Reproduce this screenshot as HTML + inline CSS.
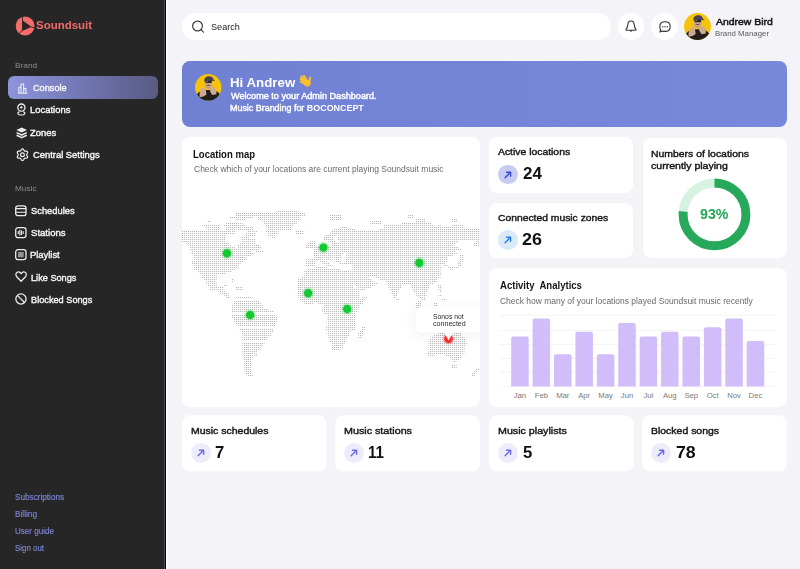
<!DOCTYPE html><html><head><meta charset="utf-8"><style>
*{margin:0;padding:0;box-sizing:border-box}
html,body{width:800px;height:569px;overflow:hidden;background:#f3f3f8;font-family:"Liberation Sans",sans-serif}
.t{position:absolute;white-space:nowrap;line-height:1}
.a{position:absolute}
.card{position:absolute;background:#fff;border-radius:8px}
.ic{position:absolute;border-radius:50%}
.ic svg{position:absolute;left:0;top:0;width:100%;height:100%}
</style></head><body>
<svg class="a" style="left:0;top:0" width="170" height="569"><rect x="0" y="0" width="164" height="569" fill="#262626"/><rect x="163.6" y="0" width="1.2" height="569" fill="#343434"/><rect x="164.8" y="0" width="1.2" height="569" fill="#050505"/><rect x="166" y="0" width="2" height="569" fill="#fcfcfe"/></svg>
<svg class="a" style="left:15px;top:15.5px" width="20" height="20" viewBox="0 0 20 20"><circle cx="10.1" cy="10" r="9.4" fill="#f46d6b"/><path d="M7.5 0.8 V14.5 L4.2 17.2 M7.5 4.8 L15.6 10.7 L19.5 12 M15.6 10.7 L7.5 14.5" stroke="#242424" stroke-width="0.9" fill="none"/><path d="M7.5 4.8 L15.6 10.7 L7.5 14.5 Z" fill="#2a2626"/></svg>
<div class="t" style="left:36.47px;top:19.73px;font-size:11.30px;font-weight:700;color:#f26b6b;transform:scaleX(1.0151);transform-origin:0 0;">Soundsuit</div>
<div class="t" style="left:15.32px;top:61.73px;font-size:8.00px;font-weight:400;color:#8d8d8d;transform:scaleX(1.0408);transform-origin:0 0;">Brand</div>
<div class="a" style="left:8.2px;top:76.3px;width:149.8px;height:22.8px;border-radius:6px;background:linear-gradient(90deg,#8e94dc 0%,#7176b2 50%,#585a82 100%)"></div>
<div class="t" style="left:33.28px;top:83.25px;font-size:9.80px;font-weight:400;color:#f5f5f7;transform:scaleX(0.9351);transform-origin:0 0;-webkit-text-stroke:0.4px currentColor;">Console</div>
<div class="t" style="left:30.47px;top:105.10px;font-size:9.80px;font-weight:400;color:#f5f5f7;transform:scaleX(0.9646);transform-origin:0 0;-webkit-text-stroke:0.4px currentColor;">Locations</div>
<div class="t" style="left:30.40px;top:127.90px;font-size:9.80px;font-weight:400;color:#f5f5f7;transform:scaleX(0.9634);transform-origin:0 0;-webkit-text-stroke:0.4px currentColor;">Zones</div>
<div class="t" style="left:32.62px;top:149.80px;font-size:9.80px;font-weight:400;color:#f5f5f7;transform:scaleX(0.9568);transform-origin:0 0;-webkit-text-stroke:0.4px currentColor;">Central Settings</div>
<div class="t" style="left:30.58px;top:206.20px;font-size:9.80px;font-weight:400;color:#f5f5f7;transform:scaleX(0.9540);transform-origin:0 0;-webkit-text-stroke:0.4px currentColor;">Schedules</div>
<div class="t" style="left:30.57px;top:228.00px;font-size:9.80px;font-weight:400;color:#f5f5f7;transform:scaleX(0.9766);transform-origin:0 0;-webkit-text-stroke:0.4px currentColor;">Stations</div>
<div class="t" style="left:30.23px;top:250.20px;font-size:9.80px;font-weight:400;color:#f5f5f7;transform:scaleX(0.9580);transform-origin:0 0;-webkit-text-stroke:0.4px currentColor;">Playlist</div>
<div class="t" style="left:30.50px;top:272.75px;font-size:9.80px;font-weight:400;color:#f5f5f7;transform:scaleX(0.9370);transform-origin:0 0;-webkit-text-stroke:0.4px currentColor;">Like Songs</div>
<div class="t" style="left:30.50px;top:294.60px;font-size:9.80px;font-weight:400;color:#f5f5f7;transform:scaleX(0.9382);transform-origin:0 0;-webkit-text-stroke:0.4px currentColor;">Blocked Songs</div>
<div class="t" style="left:15.32px;top:184.83px;font-size:8.00px;font-weight:400;color:#8d8d8d;transform:scaleX(1.0288);transform-origin:0 0;">Music</div>
<svg class="a" style="left:17px;top:82.5px;overflow:visible" width="14" height="14" viewBox="0 0 14 14"><path d="M1 10.3 H10.2 M1.8 10.3 V4.3 H4 V10.3 M4 10.3 V1 H6.6 V10.3 M6.6 10.3 V5.6 H8.9 V10.3" stroke="#ededed" stroke-width="1.1" fill="none" stroke-linejoin="round"/></svg>
<svg class="a" style="left:16.9px;top:103px;overflow:visible" width="14" height="14" viewBox="0 0 14 14"><circle cx="4.4" cy="4.6" r="3.6" stroke="#ededed" stroke-width="1.3" fill="none"/><circle cx="4.4" cy="4.4" r="1.2" fill="#ededed"/><path d="M2.4 8.6 Q0.6 9.5 0.9 10.8 Q1.5 12 4.4 12 Q7.3 12 7.9 10.8 Q8.2 9.5 6.4 8.6" stroke="#ededed" stroke-width="1.2" fill="none"/></svg>
<svg class="a" style="left:15.5px;top:127.1px;overflow:visible" width="14" height="14" viewBox="0 0 14 14"><path d="M5.7 0.6 L11 3 L5.7 5.4 L0.4 3 Z" fill="#ededed"/><path d="M0.6 5.6 L5.7 8 L10.8 5.6 M0.6 8.2 L5.7 10.6 L10.8 8.2" stroke="#ededed" stroke-width="1.6" fill="none" stroke-linejoin="round"/></svg>
<svg class="a" style="left:16px;top:147.5px;overflow:visible" width="14" height="14" viewBox="0 0 14 14"><path d="M6.45 0.85 L7.04 1.04 L7.54 1.55 L7.91 2.19 L8.20 2.76 L8.53 3.11 L8.98 3.21 L9.62 3.18 L10.36 3.18 L11.05 3.36 L11.52 3.77 L11.65 4.39 L11.46 5.07 L11.08 5.72 L10.74 6.25 L10.60 6.70 L10.74 7.15 L11.08 7.68 L11.46 8.33 L11.65 9.01 L11.52 9.62 L11.05 10.04 L10.36 10.22 L9.62 10.22 L8.98 10.19 L8.53 10.29 L8.20 10.64 L7.91 11.21 L7.54 11.85 L7.04 12.36 L6.45 12.55 L5.86 12.36 L5.36 11.85 L4.99 11.21 L4.70 10.64 L4.38 10.29 L3.92 10.19 L3.28 10.22 L2.54 10.22 L1.85 10.04 L1.38 9.63 L1.25 9.01 L1.44 8.33 L1.82 7.68 L2.16 7.15 L2.30 6.70 L2.16 6.25 L1.82 5.72 L1.44 5.07 L1.25 4.39 L1.38 3.77 L1.85 3.36 L2.54 3.18 L3.28 3.18 L3.92 3.21 L4.38 3.11 L4.70 2.76 L4.99 2.19 L5.36 1.55 L5.86 1.04Z" stroke="#ededed" stroke-width="1.2" fill="none" stroke-linejoin="round"/><circle cx="6.45" cy="6.7" r="1.9" stroke="#ededed" stroke-width="1.2" fill="none"/></svg>
<svg class="a" style="left:15.1px;top:205.3px;overflow:visible" width="14" height="14" viewBox="0 0 14 14"><rect x="0.7" y="0.8" width="10.3" height="9.9" rx="2.3" stroke="#ededed" stroke-width="1.3" fill="none"/><path d="M0.8 3.6 H11 M0.8 7.2 H11" stroke="#ededed" stroke-width="1.1"/></svg>
<svg class="a" style="left:15.1px;top:227.3px;overflow:visible" width="14" height="14" viewBox="0 0 14 14"><rect x="0.7" y="0.7" width="10.3" height="9.9" rx="2.3" stroke="#ededed" stroke-width="1.3" fill="none"/><path d="M3.3 4 V7.3 M4.9 2.8 V8.5 M6.5 3.4 V7.9 M8.2 4.3 V7" stroke="#ededed" stroke-width="1.1"/></svg>
<svg class="a" style="left:15.1px;top:249.3px;overflow:visible" width="14" height="14" viewBox="0 0 14 14"><rect x="0.7" y="0.7" width="10.3" height="9.9" rx="2.3" stroke="#ededed" stroke-width="1.3" fill="none"/><rect x="3" y="3" width="5.7" height="5.3" fill="#ededed" opacity="0.55"/></svg>
<svg class="a" style="left:15px;top:271.4px;overflow:visible" width="14" height="14" viewBox="0 0 14 14"><path d="M6.1 10.2 L1.7 5.8 Q0.2 4 1.2 2.2 Q2.6 0.2 4.6 1.2 L6.1 2.5 L7.6 1.2 Q9.6 0.2 11 2.2 Q12 4 10.5 5.8 Z" stroke="#ededed" stroke-width="1.3" fill="none" stroke-linejoin="round"/></svg>
<svg class="a" style="left:15px;top:293.25px;overflow:visible" width="14" height="14" viewBox="0 0 14 14"><circle cx="5.95" cy="5.95" r="5.1" stroke="#ededed" stroke-width="1.3" fill="none"/><path d="M2.4 2.4 L9.5 9.5" stroke="#ededed" stroke-width="1.3"/></svg>
<div class="t" style="left:15.43px;top:493.86px;font-size:8.20px;font-weight:400;color:#7d87d6;transform:scaleX(0.9989);transform-origin:0 0;-webkit-text-stroke:0.15px currentColor;">Subscriptions</div>
<div class="t" style="left:15.12px;top:510.66px;font-size:8.20px;font-weight:400;color:#7d87d6;transform:scaleX(1.0060);transform-origin:0 0;-webkit-text-stroke:0.15px currentColor;">Billing</div>
<div class="t" style="left:15.18px;top:528.16px;font-size:8.20px;font-weight:400;color:#7d87d6;transform:scaleX(0.9817);transform-origin:0 0;-webkit-text-stroke:0.15px currentColor;">User guide</div>
<div class="t" style="left:15.44px;top:545.36px;font-size:8.20px;font-weight:400;color:#7d87d6;transform:scaleX(0.9677);transform-origin:0 0;-webkit-text-stroke:0.15px currentColor;">Sign out</div>
<div class="a" style="left:182px;top:13.3px;width:429px;height:26.4px;border-radius:13.2px;background:#fff"></div>
<svg class="a" style="left:189px;top:18px" width="18" height="18" viewBox="0 0 18 18"><circle cx="8.5" cy="8" r="4.9" stroke="#3c3c3c" stroke-width="1.2" fill="none"/><path d="M12 11.6 L14.4 14.2" stroke="#3c3c3c" stroke-width="1.2" stroke-linecap="round"/></svg>
<div class="t" style="left:211.08px;top:22.24px;font-size:9.40px;font-weight:400;color:#1c1c1c;transform:scaleX(0.9740);transform-origin:0 0;">Search</div>
<div class="ic" style="left:617.5px;top:12.9px;width:26.8px;height:26.8px;background:#fff"></div>
<svg class="a" style="left:622px;top:17.5px" width="18" height="18" viewBox="0 0 18 18"><path d="M9 2.9 Q12 2.9 12.2 6.6 Q12.4 9.6 14.1 11.5 Q14.4 12.2 13.5 12.2 H4.5 Q3.6 12.2 3.9 11.5 Q5.6 9.6 5.8 6.6 Q6 2.9 9 2.9 Z" stroke="#2e2e2e" stroke-width="1.05" fill="none" stroke-linejoin="round"/><path d="M7.7 12.4 Q9 15.2 10.3 12.4 Z" fill="#2e2e2e"/></svg>
<div class="ic" style="left:651px;top:12.9px;width:26.8px;height:26.8px;background:#fff"></div>
<svg class="a" style="left:655.5px;top:17.5px" width="18" height="18" viewBox="0 0 18 18"><path d="M9 3.8 Q14.2 3.8 14.2 8.7 Q14.2 13.4 9 13.4 Q7.6 13.4 6.4 12.9 L3.9 14 L4.7 11.7 Q3.8 10.5 3.8 8.7 Q3.8 3.8 9 3.8 Z" stroke="#333" stroke-width="1.1" fill="none" stroke-linejoin="round"/><circle cx="6.7" cy="8.7" r="0.7" fill="#333"/><circle cx="9" cy="8.7" r="0.7" fill="#333"/><circle cx="11.3" cy="8.7" r="0.7" fill="#333"/></svg>
<svg class="a" style="left:684.4px;top:12.899999999999999px" width="27" height="27" viewBox="0 0 40 40"><defs><clipPath id="cpa"><circle cx="20" cy="20" r="20"/></clipPath></defs><g clip-path="url(#cpa)"><rect width="40" height="40" fill="#f6c30b"/><path d="M1 42 L3.5 30 Q8 24.5 14 24 L26 24 Q33 24.5 37 30 L40 42 Z" fill="#221e1b"/><ellipse cx="20.2" cy="15.5" rx="5.6" ry="7.2" fill="#c7a288"/><path d="M16.5 17 Q20 15.3 23.8 17 Q20 18.4 16.5 17 Z" fill="#4a3a30"/><path d="M13.8 10.2 Q14 3.6 21 3.5 Q27.5 3.8 28 8.5 L30.5 10.2 L13.8 11.2 Z" fill="#4b4250"/><rect x="15.6" y="10" width="9.8" height="3.6" rx="1.5" fill="#2a2526"/><rect x="17" y="10.5" width="2.6" height="1.3" fill="#9e8d80"/><path d="M7 34.5 Q5.5 26 11 21 Q14.5 20 16.3 23.5 L17.2 31 Q13 35.5 7 34.5 Z" fill="#cdab92"/><path d="M22.2 22.5 Q25 18.2 29 20 Q33 24 32.2 30.5 L26 31.5 Q22 27.5 22.2 22.5 Z" fill="#cdab92"/></g></svg>
<div class="t" style="left:716.18px;top:16.82px;font-size:9.90px;font-weight:400;color:#141414;transform:scaleX(1.0570);transform-origin:0 0;-webkit-text-stroke:0.5px currentColor;">Andrew Bird</div>
<div class="t" style="left:715.11px;top:29.70px;font-size:7.80px;font-weight:400;color:#5c5c5c;transform:scaleX(1.0048);transform-origin:0 0;">Brand Manager</div>
<div class="a" style="left:182px;top:61.2px;width:604.6px;height:66.3px;border-radius:8px;background:linear-gradient(90deg,#7080d3,#7889dc)"></div>
<svg class="a" style="left:195.39999999999998px;top:74.4px" width="26.6" height="26.6" viewBox="0 0 40 40"><defs><clipPath id="cpb"><circle cx="20" cy="20" r="20"/></clipPath></defs><g clip-path="url(#cpb)"><rect width="40" height="40" fill="#f6c30b"/><path d="M1 42 L3.5 30 Q8 24.5 14 24 L26 24 Q33 24.5 37 30 L40 42 Z" fill="#221e1b"/><ellipse cx="20.2" cy="15.5" rx="5.6" ry="7.2" fill="#c7a288"/><path d="M16.5 17 Q20 15.3 23.8 17 Q20 18.4 16.5 17 Z" fill="#4a3a30"/><path d="M13.8 10.2 Q14 3.6 21 3.5 Q27.5 3.8 28 8.5 L30.5 10.2 L13.8 11.2 Z" fill="#4b4250"/><rect x="15.6" y="10" width="9.8" height="3.6" rx="1.5" fill="#2a2526"/><rect x="17" y="10.5" width="2.6" height="1.3" fill="#9e8d80"/><path d="M7 34.5 Q5.5 26 11 21 Q14.5 20 16.3 23.5 L17.2 31 Q13 35.5 7 34.5 Z" fill="#cdab92"/><path d="M22.2 22.5 Q25 18.2 29 20 Q33 24 32.2 30.5 L26 31.5 Q22 27.5 22.2 22.5 Z" fill="#cdab92"/></g></svg>
<div class="t" style="left:229.71px;top:75.90px;font-size:13.00px;font-weight:700;color:#fff;transform:scaleX(1.0229);transform-origin:0 0;">Hi Andrew</div>
<svg class="a" style="left:298px;top:74px" width="14" height="14" viewBox="0 0 14 14"><g stroke="#fbbf2a" stroke-linecap="round" fill="none"><path d="M5.9 1.9 L9 6.8" stroke-width="2.1"/><path d="M3.4 2.5 L7.6 7.6" stroke-width="2.1"/><path d="M2.6 4.8 L7.2 9" stroke-width="2.1"/><path d="M2.8 7.6 L7.2 10.2" stroke-width="2"/><path d="M12.3 3.8 L11 8.2" stroke-width="2"/></g><ellipse cx="9.4" cy="9.3" rx="3.3" ry="3.3" fill="#fbbf2a"/><path d="M7 12 Q9.5 13.3 11.8 11.2" stroke="#e9a21c" stroke-width="0.8" fill="none"/></svg>
<div class="t" style="left:230.56px;top:91.55px;font-size:8.80px;font-weight:400;color:#fff;transform:scaleX(1.0353);transform-origin:0 0;-webkit-text-stroke:0.4px currentColor;">Welcome to your Admin Dashboard.</div>
<div class="t" style="left:229.87px;top:103.65px;font-size:8.80px;font-weight:400;color:#fff;transform:scaleX(1.0136);transform-origin:0 0;-webkit-text-stroke:0.4px currentColor;">Music Branding for <b style="-webkit-text-stroke:0">BOCONCEPT</b></div>
<div class="card" style="left:182px;top:137px;width:298px;height:269.5px;overflow:hidden">
<svg style="position:absolute;left:0;top:0" width="298" height="269" viewBox="182 137 298 269"><defs><pattern id="dots" patternUnits="userSpaceOnUse" width="2" height="2"><rect x="0" y="1" width="1" height="1" fill="#b6b6b6"/><rect x="1" y="1" width="1" height="1" fill="#f6f6f6"/></pattern><radialGradient id="gg"><stop offset="0.55" stop-color="#12c92f"/><stop offset="0.65" stop-color="#12c92f" stop-opacity="0.35"/><stop offset="1" stop-color="#12c92f" stop-opacity="0"/></radialGradient><radialGradient id="rg"><stop offset="0.6" stop-color="#ff2d2d"/><stop offset="0.7" stop-color="#ff2d2d" stop-opacity="0.35"/><stop offset="1" stop-color="#ff2d2d" stop-opacity="0"/></radialGradient><filter id="sh" x="-80%" y="-150%" width="260%" height="400%"><feDropShadow dx="0" dy="2" stdDeviation="6" flood-color="#6060b0" flood-opacity="0.10"/></filter></defs>
<path d="M276.3 210H298.2V212H276.3ZM235.3 212H257.7V214H235.3ZM257.8 212H305.7V214H257.8ZM235.3 214H257.7V216H235.3ZM257.8 214H305.7V216H257.8ZM329.8 214H341.7V216H329.8ZM407.7 214H413.6V216H407.7ZM229.3 216H253.2V218H229.3ZM257.8 216H300.4V218H257.8ZM329.8 216H341.7V218H329.8ZM407.7 216H413.6V218H407.7ZM235.3 218H245.7V220H235.3ZM258.3 218H300.7V220H258.3ZM329.8 218H341.7V220H329.8ZM415.2 218H425.5V220H415.2ZM451.1 218H456.9V220H451.1ZM206.8 220H211.2V222H206.8ZM262.3 220H296.7V222H262.3ZM370.3 220H382.2V222H370.3ZM415.2 220H425.5V222H415.2ZM451.1 220H456.9V222H451.1ZM226.3 222H242.7V224H226.3ZM263.8 222H296.7V224H263.8ZM370.3 222H382.2V224H370.3ZM401.7 222H431.5V224H401.7ZM202.3 224H220.2V226H202.3ZM223.3 224H245.7V226H223.3ZM265.3 224H293.7V226H265.3ZM383.8 224H389.7V226H383.8ZM397.3 224H410.7V226H397.3ZM385.3 224H434.5V226H385.3ZM437.3 224H441.7V226H437.3ZM451.1 224H464.4V226H451.1ZM205.3 226H220.2V228H205.3ZM224.8 226H233.7V228H224.8ZM233.8 226H242.7V228H233.8ZM244.3 226H253.2V228H244.3ZM266.8 226H290.7V228H266.8ZM340.3 226H347.7V228H340.3ZM383.8 226H410.7V228H383.8ZM385.3 226H464.4V228H385.3ZM206.8 228H220.2V230H206.8ZM225.3 228H235.7V230H225.3ZM236.8 228H244.2V230H236.8ZM244.3 228H253.2V230H244.3ZM266.8 228H292.2V230H266.8ZM332.8 228H355.2V230H332.8ZM379.3 228H410.7V230H379.3ZM380.8 228H480.7V230H380.8ZM181.6 230H236.2V232H181.6ZM246.8 230H257.2V232H246.8ZM265.3 230H278.7V232H265.3ZM295.3 230H304.2V232H295.3ZM331.3 230H410.7V232H331.3ZM379.3 230H480.7V232H379.3ZM181.3 232H234.7V234H181.3ZM245.3 232H255.7V234H245.3ZM268.3 232H278.7V234H268.3ZM295.3 232H303.7V234H295.3ZM329.8 232H410.7V234H329.8ZM379.3 232H480.7V234H379.3ZM181.3 234H225.7V236H181.3ZM245.3 234H255.7V236H245.3ZM268.3 234H275.7V236H268.3ZM325.3 234H335.7V236H325.3ZM337.3 234H410.7V236H337.3ZM379.3 234H480.7V236H379.3ZM181.3 236H225.7V238H181.3ZM240.8 236H249.7V238H240.8ZM271.3 236H275.7V238H271.3ZM323.8 236H334.2V238H323.8ZM337.3 236H410.7V238H337.3ZM379.3 236H480.7V238H379.3ZM181.3 238H225.7V240H181.3ZM240.8 238H255.7V240H240.8ZM323.8 238H334.2V240H323.8ZM337.3 238H410.7V240H337.3ZM379.3 238H480.7V240H379.3ZM181.3 240H225.7V242H181.3ZM240.8 240H255.7V242H240.8ZM310.3 240H314.7V242H310.3ZM328.3 240H335.7V242H328.3ZM338.8 240H410.7V242H338.8ZM379.3 240H458.4V242H379.3ZM475.0 240H480.7V242H475.0ZM186.1 242H228.7V244H186.1ZM239.3 242H255.7V244H239.3ZM307.3 242H316.2V244H307.3ZM331.3 242H410.7V244H331.3ZM379.3 242H455.4V244H379.3ZM473.3 242H479.4V244H473.3ZM188.3 244H231.7V246H188.3ZM237.8 244H260.2V246H237.8ZM305.8 244H316.2V246H305.8ZM331.3 244H410.7V246H331.3ZM379.3 244H453.9V246H379.3ZM473.3 244H479.4V246H473.3ZM189.8 246H234.7V248H189.8ZM237.8 246H261.7V248H237.8ZM305.8 246H320.7V248H305.8ZM326.8 246H410.7V248H326.8ZM379.3 246H458.4V248H379.3ZM189.8 248H258.7V250H189.8ZM313.3 248H410.7V250H313.3ZM379.3 248H461.4V250H379.3ZM191.3 250H251.2V252H191.3ZM255.8 250H263.2V252H255.8ZM313.3 250H410.7V252H313.3ZM379.3 250H455.4V252H379.3ZM191.3 252H254.2V254H191.3ZM313.3 252H343.2V254H313.3ZM346.3 252H410.7V254H346.3ZM379.3 252H456.9V254H379.3ZM192.8 254H251.2V256H192.8ZM313.3 254H332.7V256H313.3ZM334.3 254H341.7V256H334.3ZM346.3 254H410.7V256H346.3ZM379.3 254H453.9V256H379.3ZM460.0 254H463.7V256H460.0ZM192.8 256H246.7V258H192.8ZM313.3 256H332.7V258H313.3ZM334.3 256H341.7V258H334.3ZM346.3 256H410.7V258H346.3ZM379.3 256H448.0V258H379.3ZM459.3 256H463.7V258H459.3ZM192.8 258H246.7V260H192.8ZM305.8 258H332.7V260H305.8ZM334.3 258H340.2V260H334.3ZM344.8 258H410.7V260H344.8ZM379.3 258H448.0V260H379.3ZM459.3 258H463.7V260H459.3ZM191.3 260H243.7V262H191.3ZM305.8 260H316.2V262H305.8ZM319.3 260H326.7V262H319.3ZM334.3 260H341.7V262H334.3ZM344.8 260H410.7V262H344.8ZM379.3 260H448.0V262H379.3ZM458.3 260H462.7V262H458.3ZM191.3 262H240.7V264H191.3ZM305.8 262H316.2V264H305.8ZM322.3 262H329.7V264H322.3ZM338.8 262H410.7V264H338.8ZM379.3 262H445.0V264H379.3ZM457.0 262H462.2V264H457.0ZM192.8 264H239.2V266H192.8ZM305.8 264H314.7V266H305.8ZM325.3 264H331.2V266H325.3ZM352.3 264H410.7V266H352.3ZM379.3 264H440.5V266H379.3ZM443.3 264H447.7V266H443.3ZM457.0 264H461.4V266H457.0ZM193.6 266H238.4V268H193.6ZM314.8 266H326.7V268H314.8ZM352.3 266H410.7V268H352.3ZM379.3 266H442.0V268H379.3ZM448.1 266H458.4V268H448.1ZM194.3 268H234.7V270H194.3ZM307.3 268H340.2V270H307.3ZM352.3 268H410.7V270H352.3ZM379.3 268H440.5V270H379.3ZM449.3 268H452.7V270H449.3ZM197.3 270H231.7V272H197.3ZM304.3 270H350.7V272H304.3ZM352.3 270H410.7V272H352.3ZM379.3 270H440.5V272H379.3ZM198.8 272H225.7V274H198.8ZM304.3 272H410.7V274H304.3ZM379.3 272H442.0V274H379.3ZM201.8 274H216.7V276H201.8ZM304.3 274H410.7V276H304.3ZM379.3 274H440.5V276H379.3ZM201.8 276H216.7V278H201.8ZM301.3 276H368.7V278H301.3ZM376.3 276H410.7V278H376.3ZM379.3 276H440.5V278H379.3ZM203.3 278H216.7V280H203.3ZM231.3 278H233.7V280H231.3ZM298.3 278H371.7V280H298.3ZM382.3 278H410.7V280H382.3ZM379.3 278H437.5V280H379.3ZM205.3 280H215.7V282H205.3ZM231.3 280H233.7V282H231.3ZM297.3 280H374.7V282H297.3ZM385.3 280H410.7V282H385.3ZM385.3 280H430.0V282H385.3ZM385.3 280H437.5V282H385.3ZM206.3 282H216.7V284H206.3ZM297.3 282H377.7V284H297.3ZM386.8 282H410.7V284H386.8ZM386.8 282H403.1V284H386.8ZM409.3 282H433.0V284H409.3ZM207.8 284H216.7V286H207.8ZM223.3 284H226.7V286H223.3ZM388.3 284H401.7V286H388.3ZM410.7 284H430.0V286H410.7ZM438.3 284H441.7V286H438.3ZM297.3 284H353.7V286H297.3ZM355.3 284H374.7V286H355.3ZM209.3 286H224.2V288H209.3ZM235.3 286H242.7V288H235.3ZM388.3 286H401.7V288H388.3ZM410.7 286H430.0V288H410.7ZM438.3 286H441.7V288H438.3ZM297.3 286H353.7V288H297.3ZM356.8 286H371.7V288H356.8ZM209.3 288H224.2V290H209.3ZM235.3 288H242.7V290H235.3ZM389.8 288H400.1V290H389.8ZM412.3 288H428.5V290H412.3ZM438.3 288H441.7V290H438.3ZM297.3 288H358.2V290H297.3ZM358.3 288H365.7V290H358.3ZM218.3 290H225.7V292H218.3ZM391.3 290H398.7V292H391.3ZM413.7 290H427.0V292H413.7ZM439.1 290H442.0V292H439.1ZM297.3 290H359.7V292H297.3ZM219.8 292H228.7V294H219.8ZM391.3 292H397.2V294H391.3ZM415.2 292H425.5V294H415.2ZM297.3 292H359.7V294H297.3ZM224.3 294H228.7V296H224.3ZM392.8 294H397.1V296H392.8ZM416.3 294H426.7V296H416.3ZM438.3 294H441.7V296H438.3ZM298.3 294H359.7V296H298.3ZM225.8 296H230.2V298H225.8ZM393.3 296H396.2V298H393.3ZM419.7 296H425.5V298H419.7ZM298.3 296H359.7V298H298.3ZM361.3 296H367.2V298H361.3ZM236.8 296H251.3V298H236.8ZM396.3 298H399.7V300H396.3ZM421.1 298H425.5V300H421.1ZM442.1 298H446.5V300H442.1ZM299.8 298H365.7V300H299.8ZM418.2 300H421.1V302H418.2ZM301.3 300H364.2V302H301.3ZM234.0 300H258.7V302H234.0ZM415.2 302H421.1V304H415.2ZM433.1 302H437.5V304H433.1ZM304.3 302H313.2V304H304.3ZM317.8 302H362.7V304H317.8ZM233.1 302H260.7V304H233.1ZM415.2 304H421.1V306H415.2ZM433.1 304H437.5V306H433.1ZM323.8 304H359.7V306H323.8ZM232.1 304H262.6V306H232.1ZM416.3 306H419.2V308H416.3ZM322.3 306H359.7V308H322.3ZM232.1 306H262.6V308H232.1ZM322.3 308H358.2V310H322.3ZM231.2 308H268.2V310H231.2ZM322.3 310H358.2V312H322.3ZM231.2 310H273.7V312H231.2ZM323.8 312H355.2V314H323.8ZM326.8 314H355.2V316H326.8ZM231.2 314H275.7V316H231.2ZM326.8 316H355.2V318H326.8ZM232.1 316H278.5V318H232.1ZM326.8 318H355.2V320H326.8ZM233.1 318H277.6V320H233.1ZM326.8 320H355.2V322H326.8ZM233.1 320H277.6V322H233.1ZM326.8 322H355.2V324H326.8ZM234.9 322H275.7V324H234.9ZM326.8 324H355.2V326H326.8ZM237.7 324H275.7V326H237.7ZM325.3 326H355.2V328H325.3ZM361.3 326H365.7V328H361.3ZM325.3 328H355.2V330H325.3ZM361.3 328H365.7V330H361.3ZM238.7 328H273.8V330H238.7ZM437.6 328H445.0V330H437.6ZM452.5 328H461.4V330H452.5ZM326.8 330H350.7V332H326.8ZM359.8 330H364.2V332H359.8ZM241.5 330H273.8V332H241.5ZM437.6 330H445.0V332H437.6ZM452.5 330H461.4V332H452.5ZM326.8 332H349.2V334H326.8ZM358.3 332H362.7V334H358.3ZM242.4 332H271.0V334H242.4ZM437.6 332H445.0V334H437.6ZM452.5 332H461.4V334H452.5ZM328.3 334H349.2V336H328.3ZM358.3 334H362.7V336H358.3ZM242.4 334H271.0V336H242.4ZM434.3 334H445.7V336H434.3ZM452.5 334H461.4V336H452.5ZM328.3 336H347.7V338H328.3ZM357.3 336H361.2V338H357.3ZM242.4 336H268.2V338H242.4ZM431.6 336H446.5V338H431.6ZM451.0 336H464.4V338H451.0ZM329.8 338H346.2V340H329.8ZM242.4 338H266.3V340H242.4ZM430.1 338H465.9V340H430.1ZM329.8 340H346.2V342H329.8ZM428.6 340H465.9V342H428.6ZM331.3 342H344.7V344H331.3ZM242.4 342H264.4V344H242.4ZM428.6 342H466.7V344H428.6ZM331.3 344H343.2V346H331.3ZM242.4 344H262.6V346H242.4ZM428.6 344H465.9V346H428.6ZM331.3 346H343.2V348H331.3ZM242.4 346H260.7V348H242.4ZM428.6 346H464.4V348H428.6ZM331.3 348H340.2V350H331.3ZM242.4 348H260.7V350H242.4ZM428.6 348H464.4V350H428.6ZM242.4 350H256.9V352H242.4ZM428.6 350H464.4V352H428.6ZM242.4 352H256.9V354H242.4ZM427.1 352H464.4V354H427.1ZM242.4 354H256.9V356H242.4ZM428.6 354H434.5V356H428.6ZM445.1 354H461.4V356H445.1ZM243.3 356H253.2V358H243.3ZM449.6 356H461.4V358H449.6ZM243.3 358H252.3V360H243.3ZM451.0 358H459.9V360H451.0ZM244.3 360H251.3V362H244.3ZM453.0 360H456.4V362H453.0ZM244.3 362H251.3V364H244.3ZM244.3 364H251.3V366H244.3ZM452.0 364H456.6V366H452.0ZM244.3 366H251.3V368H244.3ZM452.0 366H456.6V368H452.0ZM244.3 368H251.3V370H244.3ZM475.3 368H479.2V370H475.3ZM244.3 370H251.3V372H244.3ZM473.3 370H477.7V372H473.3ZM245.3 372H251.3V374H245.3ZM471.3 372H475.2V374H471.3ZM247.1 374H253.2V376H247.1ZM471.3 374H475.2V376H471.3Z" fill="url(#dots)"/>
<circle cx="226.9" cy="253.3" r="6.7" fill="url(#gg)"/>
<circle cx="323.4" cy="247.5" r="6.7" fill="url(#gg)"/>
<circle cx="419.3" cy="262.9" r="6.7" fill="url(#gg)"/>
<circle cx="308.2" cy="293.2" r="6.7" fill="url(#gg)"/>
<circle cx="347.2" cy="309" r="6.7" fill="url(#gg)"/>
<circle cx="250.1" cy="315" r="6.7" fill="url(#gg)"/>
<circle cx="448.5" cy="338.8" r="6.5" fill="url(#rg)"/>
<g filter="url(#sh)"><rect x="416" y="306.8" width="80" height="25.6" rx="6" fill="#fff"/><path d="M443.6 331.5 L448.6 340.3 L453.6 331.5 Z" fill="#fff"/></g>
</svg>
</div>
<div class="t" style="left:193.36px;top:149.98px;font-size:10.30px;font-weight:700;color:#141414;transform:scaleX(0.9264);transform-origin:0 0;">Location map</div>
<div class="t" style="left:193.57px;top:164.88px;font-size:9.00px;font-weight:400;color:#6a6a6a;transform:scaleX(0.9427);transform-origin:0 0;">Check which of your locations are current playing Soundsuit music</div>
<div class="t" style="left:433.49px;top:312.93px;font-size:8.00px;font-weight:400;color:#2a2a2a;transform:scaleX(0.8510);transform-origin:0 0;">Sonos not</div>
<div class="t" style="left:432.60px;top:319.53px;font-size:8.00px;font-weight:400;color:#2a2a2a;transform:scaleX(0.8873);transform-origin:0 0;">connected</div>
<div class="card" style="left:489px;top:137px;width:144px;height:56px"></div>
<div class="t" style="left:498.48px;top:147.24px;font-size:9.40px;font-weight:400;color:#161616;transform:scaleX(1.1070);transform-origin:0 0;-webkit-text-stroke:0.4px currentColor;">Active locations</div><div class="ic" style="left:497.9px;top:164.6px;width:19.8px;height:19.8px;background:#c8ccf2"><svg viewBox="0 0 20 20"><path d="M7.2 12.8 L12.6 7.4 M8.6 7.3 H12.7 V11.4" stroke="#3a49d4" stroke-width="1.5" fill="none" stroke-linecap="round" stroke-linejoin="round"/></svg></div><div class="t" style="left:522.51px;top:166.36px;font-size:16.00px;font-weight:700;color:#111;transform:scaleX(1.0608);transform-origin:0 0;">24</div>
<div class="card" style="left:489px;top:202.5px;width:144px;height:55.5px"></div>
<div class="t" style="left:497.97px;top:212.74px;font-size:9.40px;font-weight:400;color:#161616;transform:scaleX(1.1015);transform-origin:0 0;-webkit-text-stroke:0.4px currentColor;">Connected music zones</div><div class="ic" style="left:497.9px;top:230.1px;width:19.8px;height:19.8px;background:#d8eaf8"><svg viewBox="0 0 20 20"><path d="M7.2 12.8 L12.6 7.4 M8.6 7.3 H12.7 V11.4" stroke="#2a80e0" stroke-width="1.5" fill="none" stroke-linecap="round" stroke-linejoin="round"/></svg></div><div class="t" style="left:522.48px;top:231.86px;font-size:16.00px;font-weight:700;color:#111;transform:scaleX(1.1222);transform-origin:0 0;">26</div>
<div class="card" style="left:642.5px;top:138px;width:144px;height:120px"></div>
<div class="t" style="left:650.89px;top:149.10px;font-size:9.80px;font-weight:400;color:#141414;transform:scaleX(1.0644);transform-origin:0 0;-webkit-text-stroke:0.4px currentColor;">Numbers of locations</div>
<div class="t" style="left:651.30px;top:160.80px;font-size:9.80px;font-weight:400;color:#141414;transform:scaleX(1.0774);transform-origin:0 0;-webkit-text-stroke:0.4px currentColor;">currently playing</div>
<svg class="a" style="left:0;top:0" width="800" height="569" viewBox="0 0 800 569"><circle cx="714.5" cy="214.4" r="31.4" stroke="#d6f2e0" stroke-width="8.9" fill="none"/><circle cx="714.5" cy="214.4" r="31.4" stroke="#26a95b" stroke-width="8.9" fill="none" stroke-dasharray="150.71 197.29" transform="rotate(-90 714.5 214.4)"/></svg>
<div class="t" style="left:700.01px;top:206.84px;font-size:14.60px;font-weight:700;color:#22a656;transform:scaleX(0.9707);transform-origin:0 0;">93%</div>
<div class="card" style="left:489px;top:268px;width:297.5px;height:138.5px"></div>
<div class="t" style="left:500.36px;top:280.59px;font-size:10.00px;font-weight:700;color:#141414;transform:scaleX(0.9552);transform-origin:0 0;">Activity&nbsp; Analytics</div>
<div class="t" style="left:500.17px;top:296.88px;font-size:9.00px;font-weight:400;color:#6a6a6a;transform:scaleX(0.9412);transform-origin:0 0;">Check how many of your locations played Soundsuit music recently</div>
<svg class="a" style="left:0;top:0" width="800" height="569" viewBox="0 0 800 569"><rect x="500" y="314.7" width="276" height="1" fill="#f4f4f8"/><rect x="500" y="330.0" width="276" height="1" fill="#f4f4f8"/><rect x="500" y="344.0" width="276" height="1" fill="#f4f4f8"/><rect x="500" y="357.8" width="276" height="1" fill="#f4f4f8"/><rect x="500" y="371.6" width="276" height="1" fill="#f4f4f8"/><rect x="500" y="385.8" width="276" height="1" fill="#f4f4f8"/><path d="M511.20 386.6 V338.40 Q511.20 336.4 513.20 336.4 H526.70 Q528.70 336.4 528.70 338.40 V386.6 Z" fill="#d0bdf9"/><path d="M532.61 386.6 V320.50 Q532.61 318.5 534.61 318.5 H548.11 Q550.11 318.5 550.11 320.50 V386.6 Z" fill="#d0bdf9"/><path d="M554.02 386.6 V356.20 Q554.02 354.2 556.02 354.2 H569.52 Q571.52 354.2 571.52 356.20 V386.6 Z" fill="#d0bdf9"/><path d="M575.43 386.6 V333.80 Q575.43 331.8 577.43 331.8 H590.93 Q592.93 331.8 592.93 333.80 V386.6 Z" fill="#d0bdf9"/><path d="M596.84 386.6 V356.20 Q596.84 354.2 598.84 354.2 H612.34 Q614.34 354.2 614.34 356.20 V386.6 Z" fill="#d0bdf9"/><path d="M618.25 386.6 V325.10 Q618.25 323.1 620.25 323.1 H633.75 Q635.75 323.1 635.75 325.10 V386.6 Z" fill="#d0bdf9"/><path d="M639.66 386.6 V338.40 Q639.66 336.4 641.66 336.4 H655.16 Q657.16 336.4 657.16 338.40 V386.6 Z" fill="#d0bdf9"/><path d="M661.07 386.6 V333.80 Q661.07 331.8 663.07 331.8 H676.57 Q678.57 331.8 678.57 333.80 V386.6 Z" fill="#d0bdf9"/><path d="M682.48 386.6 V338.40 Q682.48 336.4 684.48 336.4 H697.98 Q699.98 336.4 699.98 338.40 V386.6 Z" fill="#d0bdf9"/><path d="M703.89 386.6 V329.20 Q703.89 327.2 705.89 327.2 H719.39 Q721.39 327.2 721.39 329.20 V386.6 Z" fill="#d0bdf9"/><path d="M725.30 386.6 V320.50 Q725.30 318.5 727.30 318.5 H740.80 Q742.80 318.5 742.80 320.50 V386.6 Z" fill="#d0bdf9"/><path d="M746.71 386.6 V342.90 Q746.71 340.9 748.71 340.9 H762.21 Q764.21 340.9 764.21 342.90 V386.6 Z" fill="#d0bdf9"/></svg>
<div class="t" style="left:504.95px;top:391.88px;width:30px;text-align:center;font-size:7.7px;color:#7a7a7a">Jan</div>
<div class="t" style="left:526.36px;top:391.88px;width:30px;text-align:center;font-size:7.7px;color:#7a7a7a">Feb</div>
<div class="t" style="left:547.77px;top:391.88px;width:30px;text-align:center;font-size:7.7px;color:#7a7a7a">Mar</div>
<div class="t" style="left:569.18px;top:391.88px;width:30px;text-align:center;font-size:7.7px;color:#7a7a7a">Apr</div>
<div class="t" style="left:590.59px;top:391.88px;width:30px;text-align:center;font-size:7.7px;color:#7a7a7a">May</div>
<div class="t" style="left:612.00px;top:391.88px;width:30px;text-align:center;font-size:7.7px;color:#7a7a7a">Jun</div>
<div class="t" style="left:633.41px;top:391.88px;width:30px;text-align:center;font-size:7.7px;color:#7a7a7a">Jul</div>
<div class="t" style="left:654.82px;top:391.88px;width:30px;text-align:center;font-size:7.7px;color:#7a7a7a">Aug</div>
<div class="t" style="left:676.23px;top:391.88px;width:30px;text-align:center;font-size:7.7px;color:#7a7a7a">Sep</div>
<div class="t" style="left:697.64px;top:391.88px;width:30px;text-align:center;font-size:7.7px;color:#7a7a7a">Oct</div>
<div class="t" style="left:719.05px;top:391.88px;width:30px;text-align:center;font-size:7.7px;color:#7a7a7a">Nov</div>
<div class="t" style="left:740.46px;top:391.88px;width:30px;text-align:center;font-size:7.7px;color:#7a7a7a">Dec</div>
<svg class="a" style="left:0;top:0" width="800" height="569"><rect x="182" y="415.3" width="144.6" height="56.2" rx="8" fill="#fff"/></svg>
<div class="t" style="left:190.64px;top:425.54px;font-size:9.40px;font-weight:400;color:#161616;transform:scaleX(1.1174);transform-origin:0 0;-webkit-text-stroke:0.4px currentColor;">Music schedules</div><div class="ic" style="left:190.9px;top:442.90000000000003px;width:19.8px;height:19.8px;background:#ececfb"><svg viewBox="0 0 20 20"><path d="M7.2 12.8 L12.6 7.4 M8.6 7.3 H12.7 V11.4" stroke="#6a6ee2" stroke-width="1.5" fill="none" stroke-linecap="round" stroke-linejoin="round"/></svg></div><div class="t" style="left:215.39px;top:444.66px;font-size:16.00px;font-weight:700;color:#111;transform:scaleX(1.0389);transform-origin:0 0;">7</div>
<svg class="a" style="left:0;top:0" width="800" height="569"><rect x="335.3" y="415.3" width="144.6" height="56.2" rx="8" fill="#fff"/></svg>
<div class="t" style="left:343.92px;top:425.54px;font-size:9.40px;font-weight:400;color:#161616;transform:scaleX(1.1447);transform-origin:0 0;-webkit-text-stroke:0.4px currentColor;">Music stations</div><div class="ic" style="left:344.2px;top:442.90000000000003px;width:19.8px;height:19.8px;background:#ececfb"><svg viewBox="0 0 20 20"><path d="M7.2 12.8 L12.6 7.4 M8.6 7.3 H12.7 V11.4" stroke="#6a6ee2" stroke-width="1.5" fill="none" stroke-linecap="round" stroke-linejoin="round"/></svg></div><div class="t" style="left:368.45px;top:444.66px;font-size:16.00px;font-weight:700;color:#111;transform:scaleX(0.9443);transform-origin:0 0;">11</div>
<svg class="a" style="left:0;top:0" width="800" height="569"><rect x="489" y="415.3" width="144.6" height="56.2" rx="8" fill="#fff"/></svg>
<div class="t" style="left:497.62px;top:425.54px;font-size:9.40px;font-weight:400;color:#161616;transform:scaleX(1.1382);transform-origin:0 0;-webkit-text-stroke:0.4px currentColor;">Music playlists</div><div class="ic" style="left:497.9px;top:442.90000000000003px;width:19.8px;height:19.8px;background:#ececfb"><svg viewBox="0 0 20 20"><path d="M7.2 12.8 L12.6 7.4 M8.6 7.3 H12.7 V11.4" stroke="#6a6ee2" stroke-width="1.5" fill="none" stroke-linecap="round" stroke-linejoin="round"/></svg></div><div class="t" style="left:522.59px;top:444.66px;font-size:16.00px;font-weight:700;color:#111;transform:scaleX(1.0426);transform-origin:0 0;">5</div>
<svg class="a" style="left:0;top:0" width="800" height="569"><rect x="642.2" y="415.3" width="144.6" height="56.2" rx="8" fill="#fff"/></svg>
<div class="t" style="left:650.84px;top:425.54px;font-size:9.40px;font-weight:400;color:#161616;transform:scaleX(1.1162);transform-origin:0 0;-webkit-text-stroke:0.4px currentColor;">Blocked songs</div><div class="ic" style="left:651.1px;top:442.90000000000003px;width:19.8px;height:19.8px;background:#ececfb"><svg viewBox="0 0 20 20"><path d="M7.2 12.8 L12.6 7.4 M8.6 7.3 H12.7 V11.4" stroke="#6a6ee2" stroke-width="1.5" fill="none" stroke-linecap="round" stroke-linejoin="round"/></svg></div><div class="t" style="left:675.54px;top:444.66px;font-size:16.00px;font-weight:700;color:#111;transform:scaleX(1.1073);transform-origin:0 0;">78</div>
</body></html>
